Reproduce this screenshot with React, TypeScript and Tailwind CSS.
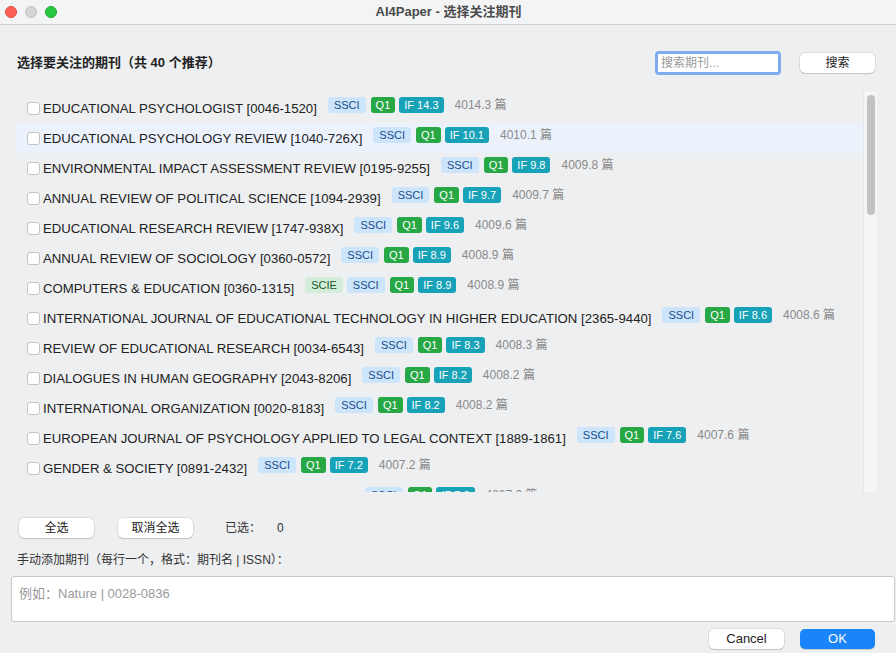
import React from "react";

type Journal = {
  name: string;
  issn: string;
  tags: string[];
  impact: string;
};

const journals: Journal[] = [
  { name: "EDUCATIONAL PSYCHOLOGIST", issn: "0046-1520", tags: ["SSCI"], impact: "14.3" },
  { name: "EDUCATIONAL PSYCHOLOGY REVIEW", issn: "1040-726X", tags: ["SSCI"], impact: "10.1" },
  { name: "ENVIRONMENTAL IMPACT ASSESSMENT REVIEW", issn: "0195-9255", tags: ["SSCI"], impact: "9.8" },
  { name: "ANNUAL REVIEW OF POLITICAL SCIENCE", issn: "1094-2939", tags: ["SSCI"], impact: "9.7" },
  { name: "EDUCATIONAL RESEARCH REVIEW", issn: "1747-938X", tags: ["SSCI"], impact: "9.6" },
  { name: "ANNUAL REVIEW OF SOCIOLOGY", issn: "0360-0572", tags: ["SSCI"], impact: "8.9" },
  { name: "COMPUTERS & EDUCATION", issn: "0360-1315", tags: ["SCIE", "SSCI"], impact: "8.9" },
  {
    name: "INTERNATIONAL JOURNAL OF EDUCATIONAL TECHNOLOGY IN HIGHER EDUCATION",
    issn: "2365-9440",
    tags: ["SSCI"],
    impact: "8.6",
  },
  { name: "REVIEW OF EDUCATIONAL RESEARCH", issn: "0034-6543", tags: ["SSCI"], impact: "8.3" },
  { name: "DIALOGUES IN HUMAN GEOGRAPHY", issn: "2043-8206", tags: ["SSCI"], impact: "8.2" },
  { name: "INTERNATIONAL ORGANIZATION", issn: "0020-8183", tags: ["SSCI"], impact: "8.2" },
  {
    name: "EUROPEAN JOURNAL OF PSYCHOLOGY APPLIED TO LEGAL CONTEXT",
    issn: "1889-1861",
    tags: ["SSCI"],
    impact: "7.6",
  },
  { name: "GENDER & SOCIETY", issn: "0891-2432", tags: ["SSCI"], impact: "7.2" },
  { name: "SOCIOLOGY OF EDUCATION REVIEW", issn: "0038-0407", tags: ["SSCI"], impact: "7.0" },
];

const cjk = "font-['Liberation_Sans','Noto_Sans_CJK_SC',sans-serif]";

const Tag = ({ label }: { label: string }) => {
  if (label === "SCIE")
    return <span className="h-[16px] px-[6px] rounded-[3px] bg-[#d4edda] text-[#155724] text-[11px] leading-[16px]">SCIE</span>;
  return <span className="h-[16px] px-[6px] rounded-[3px] bg-[#cce5fb] text-[#1a4d8c] text-[11px] leading-[16px]">{label}</span>;
};

const Row = ({ j, active }: { j: Journal; active: boolean }) => (
  <div className={`flex items-start h-[30px] shrink-0 pl-[11px] ${active ? "bg-[#ecf2fc]" : ""}`}>
    <span className="mt-[9px] w-[13px] h-[13px] rounded-[3px] bg-white border border-[#c4c4c4] shrink-0" />
    <span className="ml-[3px] mt-[7px] text-[13.2px] leading-[18px] text-[#222] whitespace-nowrap">
      {j.name} [{j.issn}]
    </span>
    <div className="ml-[11px] mt-[4px] flex items-center gap-[4px] whitespace-nowrap">
      {j.tags.map((t) => (
        <Tag key={t} label={t} />
      ))}
      <span className="ml-[1px] h-[16px] px-[5px] rounded-[3px] bg-[#28a745] text-white text-[11px] leading-[16px] font-medium">Q1</span>
      <span className="h-[16px] px-[5px] rounded-[3px] bg-[#17a2b8] text-white text-[11px] leading-[16px] font-medium">
        IF {j.impact}
      </span>
      <span className="ml-[7px] text-[12px] leading-[16px] text-[#8a8a8a]">{(4000 + parseFloat(j.impact)).toFixed(1)} 篇</span>
    </div>
  </div>
);

const MacButton = ({ children, className = "" }: { children: React.ReactNode; className?: string }) => (
  <button
    className={`h-[20px] w-[75px] rounded-[5px] bg-white text-[12px] leading-[20px] text-[#222] shadow-[0_0_0_0.5px_rgba(0,0,0,0.15),0_1px_1px_rgba(0,0,0,0.12)] ${className}`}
  >
    {children}
  </button>
);

export default function App() {
  return (
    <div className={`w-[896px] h-[653px] flex flex-col bg-[#eeeff1] overflow-hidden ${cjk}`}>
      {/* Title bar */}
      <div className="h-[25px] shrink-0 flex items-center bg-[#f3f4f5] border-b border-[#cfd1d3]">
        <div className="flex gap-[8px] pl-[5px]">
          <span className="w-[12px] h-[12px] rounded-full bg-[#fe5f57] border border-[#e14942]" />
          <span className="w-[12px] h-[12px] rounded-full bg-[#d4d5d7] border border-[#c0c1c3]" />
          <span className="w-[12px] h-[12px] rounded-full bg-[#28c840] border border-[#1ea932]" />
        </div>
        <div className="flex-1 text-center text-[13px] font-bold text-[#4b4b4b] -ml-[56px]">AI4Paper - 选择关注期刊</div>
      </div>

      {/* Header */}
      <div className="mt-[26px] h-[24px] flex items-center shrink-0">
        <span className="ml-[17px] text-[13px] font-bold text-[#222]">选择要关注的期刊（共 40 个推荐）</span>
        <div className="ml-auto w-[126px] h-[24px] rounded-[4px] bg-[#7fabf2] p-[3px]">
          <div className="w-full h-full bg-white flex items-center pl-[3px] text-[12px] text-[#9a9a9a]">搜索期刊...</div>
        </div>
        <MacButton className="ml-[19px] mr-[21px]">搜索</MacButton>
      </div>

      {/* List */}
      <div className="mt-[17px] ml-[16px] w-[861px] h-[400px] flex overflow-hidden shrink-0">
        <div className="w-[847px] flex flex-col pt-[1px] overflow-hidden">
          {journals.map((j, i) => (
            <Row key={j.issn} j={j} active={i === 1} />
          ))}
        </div>
        <div className="w-[14px] bg-[#f5f5f6] border-l border-[#e6e6e8] pt-[3px] flex justify-center">
          <div className="w-[8px] h-[120px] rounded-full bg-[#c2c2c2]" />
        </div>
      </div>

      {/* Selection buttons */}
      <div className="mt-[26px] h-[20px] flex items-center shrink-0">
        <MacButton className="ml-[19px]">全选</MacButton>
        <MacButton className="ml-[24px]">取消全选</MacButton>
        <span className="ml-[32px] text-[12px] text-[#333]">已选：</span>
        <span className="ml-[16px] text-[12px] text-[#333]">0</span>
      </div>

      <div className="mt-[14px] ml-[17px] h-[16px] text-[12px] leading-[16px] text-[#333] shrink-0">
        手动添加期刊（每行一个，格式：期刊名 | ISSN）：
      </div>

      <div className="mt-[8px] ml-[11px] mr-[1px] h-[46px] bg-white border border-[#c9c9cb] rounded-[3px] px-[7px] pt-[7px] text-[13px] text-[#9a9a9a] shrink-0">
        例如：Nature | 0028-0836
      </div>

      <div className="mt-[7px] h-[20px] flex justify-end shrink-0">
        <MacButton className="text-[13px]">Cancel</MacButton>
        <button className="ml-[16px] mr-[21px] h-[20px] w-[75px] rounded-[5px] bg-[#1a84fb] text-white text-[13px] leading-[20px] shadow-[0_1px_1px_rgba(0,0,0,0.15)]">
          OK
        </button>
      </div>
    </div>
  );
}
